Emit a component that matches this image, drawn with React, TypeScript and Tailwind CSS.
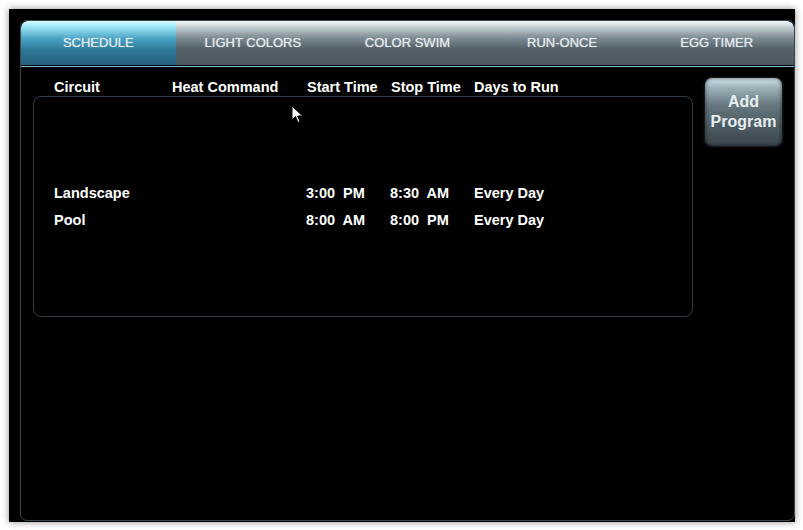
const tabs = ['SCHEDULE', 'LIGHT COLORS', 'COLOR SWIM', 'RUN-ONCE', 'EGG TIMER'];

const programs = [
  { circuit: 'Landscape', heat: '', start: '3:00  PM', stop: '8:30  AM', days: 'Every Day' },
  { circuit: 'Pool', heat: '', start: '8:00  AM', stop: '8:00  PM', days: 'Every Day' },
];

function Cursor() {
  return (
    <svg className="absolute left-[282px] top-[96px]" width="13" height="19" viewBox="0 0 13 19">
      <path d="M1 1 L1 15 L4.5 11.5 L7 17.5 L9 16.6 L6.6 11 L11.5 11 Z" fill="#fff" stroke="#000" strokeWidth="1" />
    </svg>
  );
}

export default function App() {
  const font = { fontFamily: '"Liberation Sans", Arial, sans-serif' };
  return (
    <div className="w-[803px] h-[530px] bg-white p-[9px] pr-[8px] pb-[8px]" style={font}>
      <div className="relative w-full h-full bg-black pt-[11px] pl-[11px] shadow-[0_0_7px_rgba(0,0,0,0.45)]">
        <div className="flex flex-col h-[501px] w-[775px] border border-[#37474f] rounded-[7px] overflow-hidden">
          {/* Tab bar */}
          <div className="flex h-[44px] rounded-t-[7px] overflow-hidden">
            {tabs.map((t, i) => (
              <div
                key={t}
                className={
                  i === 0
                    ? 'flex-1 flex items-center justify-center text-[13px] text-[#dfeaf0] [text-shadow:0_0_1px_rgba(255,255,255,0.7)] bg-[linear-gradient(to_bottom,#dcfcff_0%,#a8eefc_10%,#4aa4c4_40%,#2e7898_65%,#245f7e_100%)]'
                    : 'flex-1 flex items-center justify-center text-[13px] text-[#e2e9ec] [text-shadow:0_0_1px_rgba(255,255,255,0.7)] bg-[linear-gradient(to_bottom,#f6f9fa_0%,#c4ced2_14%,#7e8c93_38%,#56636a_62%,#4a575e_100%)]'
                }
              >
                {t}
              </div>
            ))}
          </div>
          <div className="h-px bg-black" />
          <div className="h-px bg-[#7fbcd4]" />

          {/* Content */}
          <div className="flex pl-[12px] pt-[12px]">
            <div className="w-[660px]">
              <div className="flex h-[17px] items-center text-[14.5px] font-bold text-white">
                <span className="ml-[21px] w-[118px]">Circuit</span>
                <span className="w-[135px]">Heat Command</span>
                <span className="w-[84px]">Start Time</span>
                <span className="w-[83px]">Stop Time</span>
                <span>Days to Run</span>
              </div>
              <div className="h-[221px] border border-[#2f3e46] rounded-[8px] pt-[83px]">
                {programs.map((p) => (
                  <div key={p.circuit} className="flex h-[27.5px] items-center text-[14.5px] font-bold text-white">
                    <span className="ml-[20px] w-[118px]">{p.circuit}</span>
                    <span className="w-[134px]">{p.heat}</span>
                    <span className="w-[84px] whitespace-pre">{p.start}</span>
                    <span className="w-[84px] whitespace-pre">{p.stop}</span>
                    <span>{p.days}</span>
                  </div>
                ))}
              </div>
            </div>
            <div className="ml-[12px] -mt-[1px]">
              <div className="w-[77px] h-[68px] rounded-[7px] flex flex-col items-center justify-center text-[16px] leading-[20px] font-bold text-[#e6eef1] bg-[linear-gradient(to_bottom,#d4e6ee_0%,#9fb2ba_14%,#67777f_40%,#4d5b62_70%,#3a464c_100%)] shadow-[inset_0_0_4px_rgba(0,0,0,0.6),0_0_3px_rgba(160,190,200,0.35)]">
                <span>Add</span>
                <span>Program</span>
              </div>
            </div>
          </div>
        </div>
        <Cursor />
      </div>
    </div>
  );
}
